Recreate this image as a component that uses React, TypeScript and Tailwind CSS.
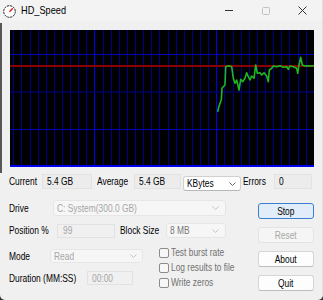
import React from "react";

const GREEN: [number, number][] = [
  [207.7, 81.7], [208.7, 77.3], [210, 73.3], [211.3, 70], [212, 58.3], [213.3, 56.7], [215, 55],
  [215.7, 36.7], [218.3, 35.7], [221.7, 36.7], [223.3, 48.3], [225, 53.3], [226.7, 50], [229, 60],
  [230.7, 49.3], [232.7, 51.7], [235, 48.3], [236.7, 42.7], [238.3, 46.7], [240, 50], [241.7, 46],
  [244, 48.3], [245.7, 35], [247.3, 43.3], [250, 42.7], [251.7, 45], [254, 42.7], [256.7, 46],
  [258.3, 51.7], [259.3, 40], [261.7, 38.3], [263.3, 36], [266.7, 36.7], [270, 35.7], [273.3, 37.3],
  [276.7, 36.7], [278.3, 39.3], [280, 36], [283.3, 36.7], [286.7, 38.3], [287.7, 43.3], [289, 35],
  [290.7, 27.3], [292.3, 35], [295, 36], [298.3, 35.7], [301.7, 36], [304, 35.7],
];

// the dialog text is narrow (scaled-down Tahoma look), so squeeze Liberation Sans
function T({ children, center }: { children: React.ReactNode; center?: boolean }) {
  return (
    <span
      className={
        center
          ? "inline-block origin-center scale-x-[0.8] whitespace-nowrap"
          : "inline-block origin-left scale-x-[0.8] whitespace-nowrap"
      }
    >
      {children}
    </span>
  );
}

function AppIcon() {
  return (
    <svg width="13" height="13" viewBox="0 0 13 13">
      <circle cx="6.5" cy="6.5" r="5.8" fill="#fff" stroke="#222" strokeWidth="1" strokeDasharray="2.2 0.8" />
      <line x1="6.5" y1="6.8" x2="9.8" y2="3.2" stroke="#e02020" strokeWidth="1.4" />
    </svg>
  );
}

function Graph() {
  const vx = Array.from({ length: 38 }, (_, i) => 3.3 + i * 8.12);
  return (
    <svg width="304" height="137" className="block bg-black">
      {vx.map((x, i) => (
        <line
          key={i}
          x1={Math.round(x) + 0.5}
          x2={Math.round(x) + 0.5}
          y1="0"
          y2="137"
          stroke={i === 10 || i === 25 ? "#0000f0" : "#00008a"}
          strokeWidth="1"
        />
      ))}
      <line x1="0" x2="304" y1="24.5" y2="24.5" stroke="#0000b4" />
      <line x1="0" x2="304" y1="62" y2="62" stroke="#000060" strokeWidth="1.5" />
      <line x1="0" x2="304" y1="99.5" y2="99.5" stroke="#0000b4" />
      <rect x="0" y="135" width="304" height="2" fill="#0000f0" />
      <rect x="0" y="35" width="304" height="2" fill="#8a0000" />
      <polyline
        points={GREEN.map((p) => p.join(",")).join(" ")}
        fill="none"
        stroke="#1fb81f"
        strokeWidth="1.6"
        strokeLinejoin="round"
      />
    </svg>
  );
}

function Chevron({ color = "#8c8c8c" }: { color?: string }) {
  return (
    <svg width="7" height="4" viewBox="0 0 7 4" className="shrink-0">
      <polyline points="0.5,0.5 3.5,3.5 6.5,0.5" fill="none" stroke={color} strokeWidth="1" />
    </svg>
  );
}

function CheckRow({ label }: { label: string }) {
  return (
    <div className="flex h-[15px] items-center">
      <div className="h-[10px] w-[10px] shrink-0 rounded-[2px] border border-[#8c8c8c] bg-[#f7f7f7]" />
      <span className="ml-[2px] text-[#707070]">
        <T>{label}</T>
      </span>
    </div>
  );
}

export default function App() {
  return (
    <div className="h-[300px] w-[323px] overflow-hidden bg-[#2f2f2f] font-['Liberation_Sans',Arial,sans-serif] text-[10.5px] leading-none text-black">
      <div className="flex h-full flex-col rounded-b-[5px] border-r border-[#e0e0e0] bg-[#f0f0f0]">
        {/* title bar */}
        <div className="flex h-[21px] items-center bg-[#f3f3f3]">
          <div className="ml-[3px] mt-[1px] flex">
            <AppIcon />
          </div>
          <span className="ml-[5px] text-[11.5px]">
            <T>HD_Speed</T>
          </span>
          <div className="ml-auto mr-[1px] flex h-full">
            <div className="flex w-[37px] items-center justify-center">
              <svg width="8" height="1"><rect width="8" height="1" fill="#333" /></svg>
            </div>
            <div className="flex w-[37px] items-center justify-center">
              <svg width="8" height="8"><rect x="0.5" y="0.5" width="7" height="7" fill="none" stroke="#c2c2c2" rx="1" /></svg>
            </div>
            <div className="flex w-[37px] items-center justify-center">
              <svg width="9" height="9">
                <path d="M0.5 0.5 L8.5 8.5 M8.5 0.5 L0.5 8.5" stroke="#333" strokeWidth="1" />
              </svg>
            </div>
          </div>
        </div>

        <div className="flex flex-1">
          <div className="mt-[2px] h-[150px] w-[2px] shrink-0 bg-[#575757]" />
          <div className="flex flex-1 flex-col">
            <div className="ml-[8px] mt-[9px]">
              <Graph />
            </div>

            {/* stats row */}
            <div className="mt-[7px] flex items-start pl-[7px]">
              <span className="flex h-[15px] w-[33px] items-center"><T>Current</T></span>
              <div className="flex h-[15px] w-[50px] items-center border border-[#e2e2e2] bg-[#ececec] pl-[4px]"><T>5.4 GB</T></div>
              <span className="ml-[5px] flex h-[15px] w-[37px] items-center"><T>Average</T></span>
              <div className="flex h-[15px] w-[47px] items-center border border-[#e2e2e2] bg-[#ececec] pl-[4px]"><T>5.4 GB</T></div>
              <div className="ml-[2px] mt-[2px] flex h-[15px] w-[58px] items-center justify-between rounded-[3px] border border-[#d0d0d0] border-b-[#b8b8b8] bg-white pl-[3px] pr-[4px]">
                <span className="w-[30px]"><T>KBytes</T></span>
                <Chevron color="#6a6a6a" />
              </div>
              <span className="ml-[2px] flex h-[15px] w-[31px] items-center"><T>Errors</T></span>
              <div className="flex h-[15px] w-[38px] items-center border border-[#e2e2e2] bg-[#ececec] pl-[4px]"><T>0</T></div>
            </div>

            {/* controls */}
            <div className="mt-[9px] flex items-start">
              <div className="w-[256px] pl-[7px]">
                <div className="flex h-[16px] items-center">
                  <span className="w-[44px]"><T>Drive</T></span>
                  <div className="flex h-[16px] w-[173px] items-center justify-between rounded-[3px] border border-[#e6e6e6] bg-[#f6f6f6] pl-[3px] pr-[6px] text-[#a6a6a6]">
                    <span className="w-[80px]"><T>C: System(300.0 GB)</T></span>
                    <Chevron color="#c4c4c4" />
                  </div>
                </div>

                <div className="mt-[7px] flex h-[15px] items-center">
                  <span className="w-[48px]"><T>Position %</T></span>
                  <div className="flex h-[14px] w-[58px] items-center border border-[#e2e2e2] bg-[#f0f0f0] pl-[5px] text-[#a6a6a6]"><T>99</T></div>
                  <span className="ml-[5px] w-[46px]"><T>Block Size</T></span>
                  <div className="flex h-[15px] w-[60px] items-center justify-between rounded-[3px] border border-[#e6e6e6] bg-[#f6f6f6] pl-[3px] pr-[6px] text-[#777]">
                    <span className="w-[20px]"><T>8 MB</T></span>
                    <Chevron color="#c4c4c4" />
                  </div>
                </div>

                <div className="mt-[7px] flex">
                  <div className="w-[150px] shrink-0">
                    <div className="mt-[4px] flex h-[14px] items-center">
                      <span className="w-[41px]"><T>Mode</T></span>
                      <div className="flex h-[14px] w-[93px] items-center justify-between rounded-[3px] border border-[#e6e6e6] bg-[#f6f6f6] pl-[3px] pr-[5px] text-[#a6a6a6]">
                        <span className="w-[20px]"><T>Read</T></span>
                        <Chevron color="#c4c4c4" />
                      </div>
                    </div>
                    <div className="mt-[8px] flex h-[14px] items-center">
                      <span className="w-[78px]"><T>Duration (MM:SS)</T></span>
                      <div className="flex h-[14px] w-[46px] items-center border border-[#e2e2e2] bg-[#f0f0f0] pl-[4px] text-[#a6a6a6]"><T>00:00</T></div>
                    </div>
                  </div>
                  <div className="flex flex-col">
                    <CheckRow label="Test burst rate" />
                    <CheckRow label="Log results to file" />
                    <CheckRow label="Write zeros" />
                  </div>
                </div>
              </div>

              <div className="flex w-[56px] flex-col gap-[8px] pt-[3px]">
                <button className="flex h-[16px] items-center justify-center rounded-[3px] border border-[#3c7fd0] bg-[#e1edf9]"><T center>Stop</T></button>
                <button className="flex h-[16px] items-center justify-center rounded-[3px] border border-[#e4e4e4] bg-[#f5f5f5] text-[#a8a8a8]"><T center>Reset</T></button>
                <button className="flex h-[16px] items-center justify-center rounded-[3px] border border-[#d6d6d6] border-b-[#bdbdbd] bg-[#fdfdfd]"><T center>About</T></button>
                <button className="flex h-[16px] items-center justify-center rounded-[3px] border border-[#d6d6d6] border-b-[#bdbdbd] bg-[#fdfdfd]"><T center>Quit</T></button>
              </div>
            </div>
          </div>
        </div>
      </div>
    </div>
  );
}
